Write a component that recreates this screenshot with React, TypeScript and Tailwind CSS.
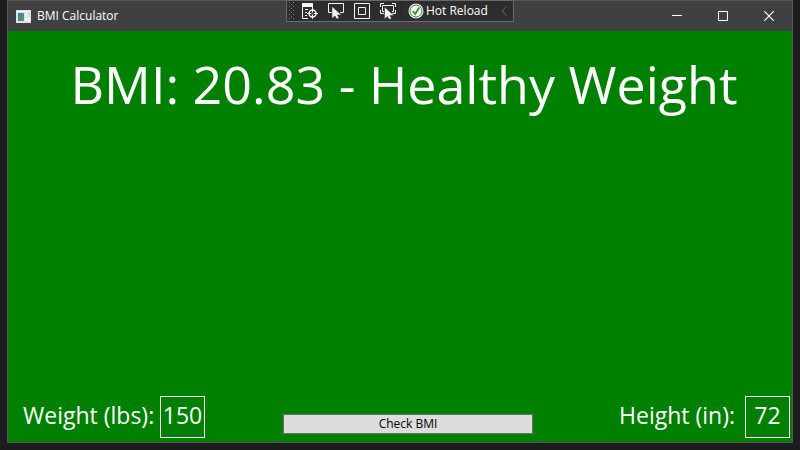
import { useState } from "react";

function AppIcon() {
  return (
    <svg width="15" height="13" viewBox="0 0 15 13" aria-hidden="true">
      <defs>
        <linearGradient id="screen" x1="0" y1="0" x2="1" y2="1">
          <stop offset="0" stopColor="#3f7fae" />
          <stop offset="1" stopColor="#4fa06c" />
        </linearGradient>
        <linearGradient id="pane" x1="0" y1="0" x2="1" y2="0">
          <stop offset="0" stopColor="#f6f8f7" />
          <stop offset="1" stopColor="#bfe0c8" />
        </linearGradient>
      </defs>
      <rect width="15" height="13" fill="#dfe1e4" />
      <rect x="1" y="1" width="13" height="1" fill="#f6f6f6" />
      <rect x="2" y="3" width="6" height="8" fill="url(#screen)" />
      <rect x="9" y="3" width="5" height="4" fill="url(#pane)" />
      <rect x="9" y="8" width="5" height="3" fill="#f3f6f4" />
    </svg>
  );
}

function Cursor({ x, y }: { x: number; y: number }) {
  return (
    <path
      transform={`translate(${x} ${y})`}
      d="M0 0V12L3 9.4L4.6 12.6L7 11.5L5.5 8.5H9.5Z"
      fill="#f4f4f4"
      stroke="#2d2d30"
      strokeWidth="0.5"
    />
  );
}

function TreeIcon() {
  return (
    <svg width="18" height="18" viewBox="0 0 18 18" fill="none" stroke="#f4f4f4" aria-hidden="true">
      <path d="M1 1H12V5H1Z" fill="#f4f4f4" stroke="none" />
      <path d="M1.5 4V16.5H7M11.5 4V6M4 7.5H7M4 10.5H6M4 13.5H6" />
      <circle cx="11.5" cy="11.5" r="3.5" strokeWidth="1.5" />
      <path d="M11.5 6V10.5M11.5 12.5V17M6 11.5H10.5M12.5 11.5H17" />
    </svg>
  );
}

function SelectIcon() {
  return (
    <svg width="18" height="18" viewBox="0 0 18 18" fill="none" stroke="#f4f4f4" aria-hidden="true">
      <path d="M5 10.5H1.5V1.5H16.5V10.5H13" />
      <Cursor x={5} y={4.5} />
    </svg>
  );
}

function AdornersIcon() {
  return (
    <svg width="18" height="18" viewBox="0 0 18 18" fill="none" stroke="#f4f4f4" aria-hidden="true">
      <path d="M1.5 1.5H16.5V16.5H1.5Z" />
      <path d="M5.5 5.5H12.5V12.5H5.5Z" />
    </svg>
  );
}

function FocusIcon() {
  return (
    <svg width="18" height="18" viewBox="0 0 18 18" fill="none" stroke="#f4f4f4" aria-hidden="true">
      <path d="M1.5 5V1.5H5M13 1.5H16.5V5M1.5 8V11.5H5M16.5 8V11.5H13" />
      <path d="M5 9.5H3.5V3.5H14.5V9.5H13" />
      <Cursor x={5.5} y={5} />
    </svg>
  );
}

function DebugToolbar() {
  const tool = "flex h-[18px] w-[18px] items-center justify-center";
  return (
    <div
      role="toolbar"
      aria-label="Debug tools"
      className="absolute -top-px left-1/2 -ml-[114px] flex h-[22px] w-[228px] items-center border border-[#6a6a6a] bg-[#2d2d30]"
    >
      <svg width="8" height="18" viewBox="0 0 8 18" className="ml-0.5 shrink-0" aria-hidden="true">
        <defs>
          <pattern id="grip" width="4" height="4" patternUnits="userSpaceOnUse">
            <rect x="0" y="0" width="1" height="1" fill="#77777a" />
            <rect x="2" y="2" width="1" height="1" fill="#77777a" />
          </pattern>
        </defs>
        <rect width="6" height="18" fill="url(#grip)" />
      </svg>
      <div className="ml-1 flex gap-2">
        <button type="button" aria-label="Go to live visual tree" className={tool}><TreeIcon /></button>
        <button type="button" aria-label="Select element" className={tool}><SelectIcon /></button>
        <button type="button" aria-label="Display layout adorners" className={tool}><AdornersIcon /></button>
        <button type="button" aria-label="Track focused element" className={tool}><FocusIcon /></button>
      </div>
      <span className="ml-1 h-4 w-px bg-[#222224]" />
      <button type="button" className="ml-1.5 flex items-center gap-0.5 text-xs whitespace-nowrap text-white">
        <svg width="16" height="16" viewBox="0 0 16 16" fill="none" aria-hidden="true">
          <circle cx="8" cy="8" r="7.5" fill="#f4f4f4" />
          <circle cx="8" cy="8" r="6" stroke="#388a34" />
          <path d="M4.8 8L7.2 11L11.2 4.5" stroke="#388a34" strokeWidth="1.8" />
        </svg>
        Hot Reload
      </button>
      <button type="button" aria-label="Collapse toolbar" className="mr-1.5 ml-auto">
        <svg width="6" height="10" viewBox="0 0 6 10" fill="none" stroke="#66666a" aria-hidden="true">
          <path d="M5.5 0.5L1 5L5.5 9.5" />
        </svg>
      </button>
    </div>
  );
}

function TitleBar() {
  const control = "flex h-full w-[46px] items-center justify-center";
  return (
    <header className="flex h-[30px] items-center bg-[#404040] pl-2 text-white">
      <AppIcon />
      <span className="ml-1.5 text-xs">BMI Calculator</span>
      <div className="ml-auto flex h-full">
        <button type="button" aria-label="Minimize" className={control}>
          <svg width="10" height="10" viewBox="0 0 10 10" stroke="#fff" aria-hidden="true"><path d="M0 4.5H10" /></svg>
        </button>
        <button type="button" aria-label="Maximize" className={control}>
          <svg width="10" height="10" viewBox="0 0 10 10" fill="none" stroke="#fff" aria-hidden="true"><path d="M0.5 0.5H9.5V9.5H0.5Z" /></svg>
        </button>
        <button type="button" aria-label="Close" className={control}>
          <svg width="10" height="10" viewBox="0 0 10 10" stroke="#fff" strokeWidth="1.2" aria-hidden="true"><path d="M0.3 0.3L9.7 9.7M9.7 0.3L0.3 9.7" /></svg>
        </button>
      </div>
    </header>
  );
}

function describe(bmi: number) {
  if (bmi < 18.5) return "Underweight";
  if (bmi < 25) return "Healthy Weight";
  if (bmi < 30) return "Overweight";
  return "Obese";
}

export default function App() {
  const [weight, setWeight] = useState("150");
  const [height, setHeight] = useState("72");
  const [bmi, setBmi] = useState(20.83);

  const check = () => {
    const value = (Number(weight) * 720) / Number(height) ** 2;
    if (Number.isFinite(value)) setBmi(value);
  };

  const field = "h-[42px] w-[45px] border border-white bg-transparent pb-1 text-center text-[23px] text-white outline-none";

  return (
    <div className="flex min-h-screen flex-col bg-[#1c1c1c] px-[7px] pb-[7px] font-['Open_Sans','Noto_Sans',sans-serif]">
      <div className="relative flex grow flex-col border border-[#555555] bg-[#008000]">
        <TitleBar />
        <DebugToolbar />
        <main className="flex grow flex-col justify-between text-white">
          <h1 className="mt-4 ml-2 text-center text-[52px] leading-[74px] whitespace-nowrap">
            BMI: {bmi.toFixed(2)} - {describe(bmi)}
          </h1>
          <div className="flex items-end justify-between pr-0.5 pb-1 pl-[15px]">
            <div className="flex items-center">
              <label htmlFor="weight" className="w-[137px] pb-1 text-[23px] whitespace-nowrap">Weight (lbs):</label>
              <input id="weight" value={weight} onChange={(e) => setWeight(e.target.value)} className={field} />
            </div>
            <button
              type="button"
              onClick={check}
              className="mb-1 h-5 w-[250px] border border-[#707070] bg-[#dddddd] text-xs text-black"
            >
              Check BMI
            </button>
            <div className="flex items-center gap-2.5">
              <label htmlFor="height" className="flex w-[124px] justify-end pb-1 text-[23px] whitespace-nowrap">Height (in):</label>
              <input id="height" value={height} onChange={(e) => setHeight(e.target.value)} className={field} />
            </div>
          </div>
        </main>
      </div>
    </div>
  );
}
